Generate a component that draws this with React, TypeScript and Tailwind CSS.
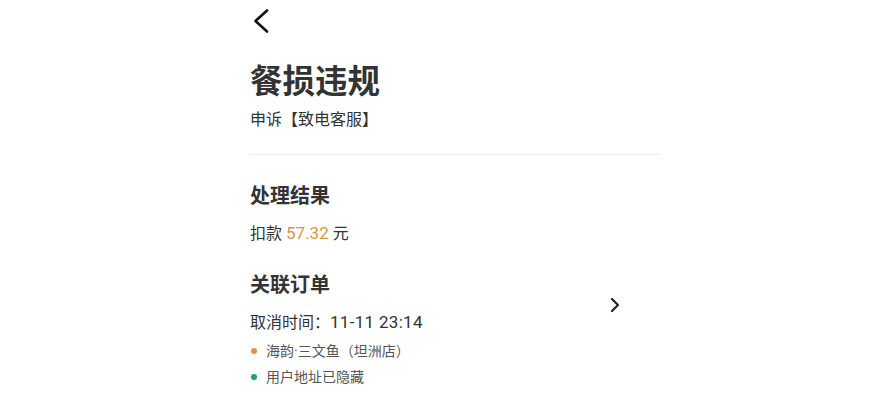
export default function App() {
  return (
    <div className="min-h-screen bg-white font-['Roboto','Noto_Sans_CJK_SC',sans-serif] text-[#333]">
      <div className="w-[411px] ml-[250px]">
        {/* 返回 */}
        <div className="pt-[9px] h-[40px]">
          <svg width="18" height="24" viewBox="0 0 18 24" fill="none" className="ml-[2px]">
            <path d="M15 1.5 3.5 12 15 22.5" stroke="#111" strokeWidth="2.6" strokeLinecap="round" strokeLinejoin="round" />
          </svg>
        </div>

        {/* 标题 */}
        <div className="pt-[20px] pb-[23px] border-b border-[#eeeeee]">
          <h1 className="text-[32.5px] leading-[44px] font-bold text-[#333]">餐损违规</h1>
          <p className="text-[16px] leading-[22px] mt-[5px] text-[#333]">申诉【致电客服】</p>
        </div>

        {/* 处理结果 */}
        <div className="pt-[27px]">
          <h2 className="text-[20px] leading-[28px] font-bold">处理结果</h2>
          <p className="text-[16px] leading-[22px] mt-[12px]">
            扣款 <span className="text-[#d49a3c] text-[17px]">57.32</span> 元
          </p>
        </div>

        {/* 关联订单 */}
        <div className="pt-[26px] relative">
          <h2 className="text-[20px] leading-[28px] font-bold">关联订单</h2>
          <svg width="12" height="16" viewBox="0 0 12 16" fill="none" className="absolute left-[359px] top-[52px]">
            <path d="M3 2 9 8 3 14" stroke="#222" strokeWidth="2.2" strokeLinecap="round" strokeLinejoin="round" />
          </svg>
          <p className="text-[16px] leading-[22px] mt-[12px]">
            取消时间：<span className="text-[17px] tracking-[0.3px]">11-11 23:14</span>
          </p>
          <div className="mt-[4px] flex items-center gap-[9px] text-[14px] leading-[26px] text-[#555]">
            <span className="size-[6px] rounded-full bg-[#e88c3f] ml-[1px]" />
            海韵·三文鱼（坦洲店）
          </div>
          <div className="flex items-center gap-[9px] text-[14px] leading-[26px] text-[#555]">
            <span className="size-[6px] rounded-full bg-[#1aa36e] ml-[1px]" />
            用户地址已隐藏
          </div>
        </div>
      </div>
    </div>
  );
}
